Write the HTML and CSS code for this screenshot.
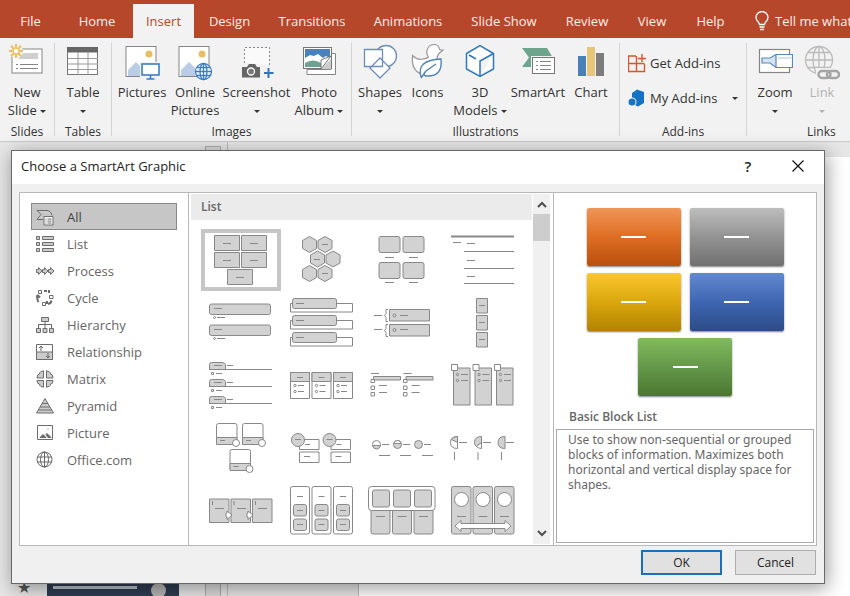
FILE: index.html
```html
<!DOCTYPE html>
<html lang="en">
<head>
<meta charset="utf-8">
<title>Choose a SmartArt Graphic</title>
<link rel="stylesheet" href="styles.css">
</head>
<body>
<div class="app">
<nav class="tabs">
<a href="#">File</a><a href="#">Home</a><a href="#" class="active" aria-current="page">Insert</a><a href="#">Design</a><a href="#">Transitions</a><a href="#">Animations</a><a href="#">Slide Show</a><a href="#">Review</a><a href="#">View</a><a href="#">Help</a>
<a href="#" class="tell"><svg width="14" height="20" viewBox="0 0 14 20" fill="none" stroke="#fff" stroke-width="1.3"><path d="M4.5 13.5C4.500 11 1 10 1 6.500a6 6 0 0 1 12 0C13 10 9.500 11 9.500 13.500zM4.500 16h5M5 18.500h4"/></svg>Tell me what</a>
</nav>

<div class="ribbon">
<section class="group">
 <div class="tools">
 <button class="tool"><svg width="36" height="38" viewBox="8 44 36 38"><rect x="11" y="50" width="30" height="24" fill="#fff" stroke="#858585"/><path d="M22 54h15v6H17z" fill="#cfcfcf"/><path d="M15 65.500h2m2 0h18M15 69.500h2m2 0h18" stroke="#858585"/><circle cx="15" cy="52" r="7" fill="#f2f2f2"/><path d="M15 45v3.500m0 7V59M8 52h3.500m7 0H22M10 47l2.500 2.500m5 5L20 57M20 47l-2.500 2.500m-5 5L10 57" stroke="#eebf60" stroke-width="2"/><circle cx="15" cy="52" r="3" fill="#fff" stroke="#eebf60" stroke-width="1.500"/></svg><span>New<br>Slide <i></i></span></button>
 </div><h2>Slides</h2>
</section>
<section class="group">
 <div class="tools">
 <button class="tool"><svg width="34" height="38" viewBox="66 44 34 38"><rect x="67.500" y="48.500" width="30" height="27" fill="#fff" stroke="#777"/><path d="M67 48h31v5.500H67z" fill="#666"/><path d="M78 53v23M88 53v23M68 59.500h30M68 65h30M68 70.500h30" stroke="#999"/></svg><span>Table<br><i></i></span></button>
 </div><h2>Tables</h2>
</section>
<section class="group">
 <div class="tools images">
 <button class="tool"><svg width="36" height="38" viewBox="125 44 36 38"><rect x="127" y="47.500" width="30" height="30" fill="#fff" stroke="#858585"/><circle cx="150" cy="55" r="3.500" fill="#e9bd68"/><path d="M129 77v-6l8-8 6 6v8z" fill="#b9cde6"/><rect x="141" y="63" width="20" height="15" fill="#f2f2f2"/><rect x="143" y="65" width="17" height="11" fill="#fff" stroke="#3b7fc0" stroke-width="1.600"/><path d="M151.500 76v4m-4 0h8" stroke="#3b7fc0" stroke-width="1.600"/></svg><span>Pictures</span></button>
 <button class="tool"><svg width="36" height="38" viewBox="178 44 36 38"><rect x="180" y="47.500" width="30" height="30" fill="#fff" stroke="#858585"/><circle cx="203" cy="55" r="3.500" fill="#e9bd68"/><path d="M182 77v-6l8-8 6 6v8z" fill="#b9cde6"/><g fill="#fff" stroke="#3b7fc0" stroke-width="1.300"><circle cx="204.500" cy="72.500" r="8"/><ellipse cx="204.500" cy="72.500" rx="3.500" ry="8"/><path d="M196.500 72.500h16M198 68.500h13M198 76.500h13M204.500 64.500v16"/></g></svg><span>Online<br>Pictures</span></button>
 <button class="tool"><svg width="36" height="38" viewBox="238 44 36 38"><path d="M243.500 64V48.500H268.500V66" fill="#fafafa" stroke="#888" stroke-dasharray="2 2"/><path d="M241 68h5l2-3h6l2 3h3v10.500h-18z" fill="#666"/><circle cx="250" cy="72.500" r="3.500" fill="#777" stroke="#fff" stroke-width="1.300"/><path d="M267.500 69v10M263 74h9.500" stroke="#3275b8" stroke-width="2"/></svg><span>Screenshot<br><i></i></span></button>
 <button class="tool"><svg width="36" height="38" viewBox="301 44 36 38"><path d="M307 75.500H335.500V54.500H331v16H307z" fill="#fff" stroke="#858585"/><rect x="303.500" y="48.500" width="28" height="21" fill="#fff" stroke="#777"/><path d="M305 50h25v9l-4-2-3 2-5-4-4 2-4-1-5 3z" fill="#4981bd"/><path d="M305 64q8-5 16 0v4h-16z" fill="#6ba390"/><path d="m321 70 10-10v10z" fill="#ccc"/><path d="m321 61 10-4-10 13z" fill="#fff" stroke="#777"/></svg><span>Photo<br>Album <i></i></span></button>
 </div><h2>Images</h2>
</section>
<section class="group">
 <div class="tools illustrations">
 <button class="tool"><svg width="36" height="38" viewBox="362 44 36 38" fill="#fff" stroke="#6a8fb9" stroke-width="1.300"><circle cx="386" cy="57" r="10.500"/><path d="M364.500 50.500h18v17h-18zM380 59l10 10-10 10-10-10z"/></svg><span>Shapes<br><i></i></span></button>
 <button class="tool"><svg width="36" height="38" viewBox="410 44 36 38" fill="#fff" stroke="#999" stroke-width="1.200"><path d="M422 75Q411 72 412.500 56.500q5 5 10 3.500 4 0 6-2-3-4-1-8 2-4.500 6.500-4.500 4.500 0 6 5.500h3l-4 3.500q-2 2-2 6v8q-4 8-15 6.500z"/><path d="M421 78Q416 61 441 60q2 18-15 17-4-1 0-5l10-7m-10 7-5 7" stroke="#4f83b9" stroke-width="1.400"/></svg><span>Icons</span></button>
 <button class="tool"><svg width="36" height="38" viewBox="462 44 36 38" fill="#fff" stroke="#2e78bf" stroke-width="1.500"><path d="m466.500 54.500 13.500-8 13.500 8V70L480 77.500 466.500 70zM469 56l7 4M493.500 54.500 480 62v15.500"/></svg><span>3D<br>Models <i></i></span></button>
 <button class="tool"><svg width="36" height="38" viewBox="521 44 36 38"><path d="M523 49h25l6 10-4 9h-27l7-9.500z" fill="#6da58c"/><rect x="532" y="57" width="25" height="20" fill="#f2f2f2"/><rect x="533.500" y="58.500" width="22" height="16" fill="#fff" stroke="#777"/><path d="M537 62.500h2m2 0h11M537 66.500h2m2 0h11M537 70.500h2m2 0h11" stroke="#8a8a8a"/></svg><span>SmartArt</span></button>
 <button class="tool"><svg width="36" height="38" viewBox="573 44 36 38"><path d="M578 57h8v20h-8z" fill="#4a80b8"/><path d="M587 48h8v29h-8z" fill="#e8c578"/><path d="M596 54h8v23h-8z" fill="#7c7c7c"/></svg><span>Chart</span></button>
 </div><h2>Illustrations</h2>
</section>
<section class="group">
 <div class="addins">
 <button><svg width="18" height="20" viewBox="628 53 18 20" fill="none" stroke="#d8562c" stroke-width="1.400"><path d="M636 56h-7.500v15.500h16V64M628.500 63.500h16M636.500 56v15.500M638 58.500h8M642 54v8"/></svg>Get Add-ins</button>
 <button><svg width="18" height="18" viewBox="629 89 18 18"><path d="m638 89.500 7 2.500v11l-6 3.500-6-3V93z" fill="#1673c4"/><circle cx="633" cy="102" r="4.500" fill="#f2f2f2"/><circle cx="633" cy="102" r="3.500" fill="#1673c4"/></svg>My Add-ins<i></i></button>
 </div><h2>Add-ins</h2>
</section>
<section class="group">
 <div class="tools links">
 <button class="tool"><svg width="36" height="38" viewBox="757 44 36 38" stroke-width="1.200"><rect x="759.500" y="50.500" width="30" height="23" fill="#fff" stroke="#858585"/><path d="M762 59h8l6-3.500h16.500v13H776l-6-4.500h-8z" fill="#d5e3f2" stroke="#5789b8"/><path d="M776 55.500h16.500v13H776z" fill="#fff" stroke="#5789b8"/><path d="M778 59h13" stroke="#b9cde6"/></svg><span>Zoom<br><i></i></span></button>
 <button class="tool" disabled><svg width="36" height="38" viewBox="804 44 36 38" fill="none" stroke="#bbb" stroke-width="1.300"><circle cx="819" cy="61" r="13.500"/><ellipse cx="819" cy="61" rx="6" ry="13.500"/><path d="M805.500 61h27M808 53.500h22M808 68.500h22M819 47v28"/><path d="M816 69h24v13h-24z" fill="#f2f2f2" stroke="none"/><g stroke="#a5a5a5" stroke-width="2.500"><rect x="818.500" y="72" width="12" height="7" rx="3.500"/><rect x="827" y="72" width="12" height="7" rx="3.500"/></g></svg><span>Link<br><i></i></span></button>
 </div><h2>Links</h2>
</section>
</div>

<main class="work">
 <aside class="thumbs"><span class="star">★</span><div class="slide"><div><b></b><b></b></div><em></em></div><div class="track"></div></aside>
 <div class="pane"></div><div class="canvas"></div>

 <section class="dialog" role="dialog" aria-labelledby="title">
 <header><h1 id="title">Choose a SmartArt Graphic</h1><button aria-label="Help" class="q">?</button><button aria-label="Close"><svg width="12" height="12" viewBox="0 0 12 12" stroke="#111" stroke-width="1.200"><path d="m.5.5 11 11m0-11-11 11"/></svg></button></header>
 <div class="panel">
 <div class="cats">
 <button class="on"><svg viewBox="36 208 18 18"><path d="M37 210.500h9q5 0 6 5M37 210.500l4 4-4 5h6"/><path class="w" d="M44 216.500h9v8.500h-9z"/><path d="M45.500 219h1m1 0h4m-6 2h1m1 0h4m-6 2h1m1 0h4"/></svg>All</button>
 <button><svg viewBox="36 235 18 18"><path d="M36.500 236.500h3v3h-3zm0 6h3v3h-3zm0 6h3v3h-3zM42.500 236.500h11v3h-11zm0 6h11v3h-11zm0 6h11v3h-11z"/></svg>List</button>
 <button><svg viewBox="36 262 18 18"><path d="M36.500 269.500h2v-2l3.500 3.500-3.500 3.500v-2h-2zM42.500 269.500h2v-2l3.500 3.500-3.500 3.500v-2h-2zM48.500 269.500h2v-2l3.500 3.500-3.500 3.500v-2h-2z"/></svg>Process</button>
 <button><svg viewBox="36 289 18 18"><path class="w" d="M38.500 290.500h3v3h-3zM49.500 295.500h3.500v3h-3.500zM42.500 302.500h3v3h-3z"/><path class="thick" d="M44 291h3m2-1v3m2.500 7.500q-.5 3-3.500 3.500m-1-3v3m-8.500-2q-2-3-.5-6m-2.500 1 2.500-1.500 2 2"/></svg>Cycle</button>
 <button><svg viewBox="36 316 18 18"><path d="M41.500 317.500h7v4h-7zM45 322v6"/><path class="n" d="M38.500 328v-3.500h13v3.500"/><path d="M36.500 328.500h4v4h-4zm6.500 0h4v4h-4zm6.500 0h4v4h-4z"/></svg>Hierarchy</button>
 <button><svg viewBox="36 343 18 18"><path class="w" d="M36.500 344.500h16v15h-16z"/><path d="M36.500 352h16v7.500h-16z"/><path class="n" d="M41 351v-5m-2 2 2-2 2 2m5 5v5m-2-2 2 2 2-2"/></svg>Relationship</button>
 <button><svg viewBox="36 370 18 18"><path d="M43.500 371v7H37q0-4 2.500-4 0-3 4.500-3zm3 0v7H53q0-4-2.500-4 0-3-4.500-3zm-3 16v-6.500H37q0 3.500 2.500 3.500 0 3 4.500 3zm3 0v-6.500H53q0 3.500-2.500 3.500 0 3-4.500 3z"/></svg>Matrix</button>
 <button><svg viewBox="36 397 18 18"><path d="m45 398.500 8.500 14.500h-17zM42 403.500h6M40 407h10M38 410h14"/></svg>Pyramid</button>
 <button><svg viewBox="36 424 18 18"><path class="w" d="M37.500 425.500h15v14h-15z"/><path d="m40 437.500 3-3 3 3zm6-3 1-1 4 4h-3z" class="d"/><circle cx="48" cy="429" r="1" class="g"/></svg>Picture</button>
 <button><svg viewBox="36 451 18 18" ><g class="n"><circle cx="44.500" cy="459.500" r="7.500"/><ellipse cx="44.500" cy="459.500" rx="4" ry="7.500"/><path d="M37 457h15m-15 5h15m-7.500-10v15"/></g></svg>Office.com</button>
 </div>

 <div class="gallery">
 <div class="listing"><h3>List</h3>
 <div class="grid">
 <button class="sel" aria-label="Basic Block List"><svg viewBox="201 229 80 62"><path class="f" d="M214.500 235.500h25v15h-25zm27 0h25v15h-25zm-27 17h25v15h-25zm27 0h25v15h-25zm-14 17h25v15h-25z"/><path d="M223 243.500h8m19 0h8m-35 17h8m19 0h8m-22 17h8"/></svg></button>
 <button aria-label="Alternating Hexagons"><svg viewBox="281 229 80 62"><path class="f" d="m309.500 236.500 7 4v8l-7 4-7-4v-8zm15.500 0 7 4v8l-7 4-7-4v-8zm-7.500 14.500 7 4v8l-7 4-7-4v-8zm15.500 0 7 4v8l-7 4-7-4v-8zm-23.500 14.500 7 4v8l-7 4-7-4v-8zm15.500 0 7 4v8l-7 4-7-4v-8z"/><path d="M322 244.500h6m-14 15h6m2 14h6"/></svg></button>
 <button aria-label="Picture Caption List"><svg viewBox="361 229 80 62"><g class="f"><rect x="379" y="236.500" width="21" height="16" rx="2"/><rect x="403" y="236.500" width="21" height="16" rx="2"/><rect x="379" y="262.500" width="21" height="16" rx="2"/><rect x="403" y="262.500" width="21" height="16" rx="2"/></g><path d="M385 257.500h9m15 0h9m-33 25h9m15 0h9"/></svg></button>
 <button aria-label="Lined List"><svg viewBox="441 229 80 62"><path d="M451 236.500h63" stroke-width="2"/><path d="M453 242.500h8m6 1h8m-11 8h50m-47 9h8m-11 8h50m-47 8h8m-11 7h50"/></svg></button>

 <button aria-label="Vertical Bullet List"><svg viewBox="201 292 80 62"><g class="f"><rect x="209.500" y="304" width="61" height="10.500" rx="2"/><rect x="209.500" y="325" width="61" height="10.500" rx="2"/></g><path d="M214 308.500h8m-5 9h8m-11 12h8m-5 9h8"/><circle cx="214.500" cy="317.500" r="1"/><circle cx="214.500" cy="338.500" r="1"/></svg></button>
 <button aria-label="Vertical Box List"><svg viewBox="281 292 80 62"><defs><g id="vb"><path class="w" d="M290.500 303.500h62v8.500h-62z"/><rect class="f" x="292.500" y="298.500" width="44" height="10" rx="2"/><path d="M296 303.500h8"/></g></defs><use href="#vb"/><use href="#vb" y="17"/><use href="#vb" y="34"/></svg></button>
 <button aria-label="Vertical Bracket List"><svg viewBox="361 292 80 62"><path class="f" d="M389.500 309.500h40v11.500h-40zm0 15h40v11.500h-40z"/><path d="M374 315.500h8m18 0h8m-34 14h8m18 0h8M388 309.500h-2v4l-1.500 2 1.500 2v4h2m0 3h-2v4l-1.500 2 1.500 2v4h2"/><circle cx="394.500" cy="315.500" r="1.500"/><circle cx="394.500" cy="330" r="1.500"/></svg></button>
 <button aria-label="Stacked Blocks"><svg viewBox="441 292 80 62"><path class="f" d="M476.500 298.500h11V313h-11zm0 17h11V330h-11zm0 17h11V347h-11z"/><path d="M479 305.500h6m-6 17h6m-6 17h6"/></svg></button>

 <button aria-label="Tab List"><svg viewBox="201 355 80 62"><defs><g id="tl"><path class="f" d="M209.500 369.500v-5q0-2 2-2h11q2 0 3 2v5z"/><path d="M209 369.500h63M214 365.500h8m5 0h6m-17 8h6"/><path class="w" d="M211.500 372.500h2v2h-2z"/></g></defs><use href="#tl"/><use href="#tl" y="17"/><use href="#tl" y="34"/></svg></button>
 <button aria-label="Horizontal Bullet List"><svg viewBox="281 355 80 62"><defs><g id="hb"><path class="w" d="M290.500 372.500h19v26h-19z"/><path class="f" d="M290.500 372.500h19v9h-19z"/><path d="M297 377.500h6m-5 8h6m-6 6h6"/><circle cx="295" cy="385.500" r="1.200"/><circle cx="295" cy="391.500" r="1.200"/></g></defs><use href="#hb"/><use href="#hb" x="21.500"/><use href="#hb" x="43"/></svg></button>
 <button aria-label="Square Accent List"><svg viewBox="361 355 80 62"><defs><g id="sa"><path d="M371 373.500h8m0 12h8m-8 7h8"/><path class="f" d="M373.500 376.500h27v3.500h-27z"/><path class="w" d="M371 379.500h3.500v3H371zm0 6.500h3.500v3.500H371zm0 6.500h3.500v3.500H371z"/></g></defs><use href="#sa"/><use href="#sa" x="32.500"/></svg></button>
 <button aria-label="Picture Accent List"><svg viewBox="441 355 80 62"><defs><g id="pa"><path class="f" d="M453.500 368h16.500v37h-16.500z"/><path class="w" d="M451.500 364.500h6v6h-6z"/><path d="M461 374.500h7m-7 6h7"/><circle cx="457.500" cy="374.500" r="1.200"/><circle cx="457.500" cy="380.500" r="1.200"/></g></defs><use href="#pa"/><use href="#pa" x="21.500"/><use href="#pa" x="43"/></svg></button>

 <button aria-label="Bending Picture Accent"><svg viewBox="201 418 80 62"><defs><g id="bp"><rect class="w" x="216.500" y="423.500" width="20.500" height="20.500" rx="2"/><path class="f" d="M216.500 437.500H237v7h-20.500z"/><path d="M220 440.500h5"/><circle class="w" cx="236" cy="443" r="3.500"/></g></defs><use href="#bp"/><use href="#bp" x="26"/><use href="#bp" x="13.500" y="26"/></svg></button>
 <button aria-label="Stacked List"><svg viewBox="281 418 80 62"><defs><g id="st"><path class="w" d="M299.500 439.500h19.500v10h-19.500zm0 12.500h19.500v10.500h-19.500z"/><circle class="f" cx="298" cy="440" r="6.500"/><path d="M295 439.500h6m4 5h5m-6 12h6"/></g></defs><use href="#st"/><use href="#st" x="31.500"/></svg></button>
 <button aria-label="Increasing Circle Process"><svg viewBox="361 418 80 62"><g class="w"><circle cx="376.500" cy="444.500" r="4"/><circle class="f" cx="397.500" cy="444.500" r="4"/><circle class="f" cx="418.500" cy="444.500" r="4"/></g><path class="f" d="M372.500 445.500h8q-1 3.500-4 3.500t-4-3.500z"/><path class="w" d="M393.500 443.500h8q-1-3-4-3t-4 3z"/><path d="M382 444.500h7m14 0h7m14 0h7m-52 11h11m10 0h11m11 0h11"/></svg></button>
 <button aria-label="Pie Process"><svg viewBox="441 418 80 62"><path class="w" d="M457.500 436.500v12q-7 0-7-6t7-6z"/><path class="f" d="M457.500 442.500v-6q-4 0-6 3zM481.500 436.500v6l-5 4q-2-1-2-4 0-6 7-6zM505 436.500v12q-7 0-7-6t7-6z"/><path class="w" d="M481.500 442.500v6q-3 0-5-2z"/><path d="M459 442.500h8m16 0h8m15 0h8M454.500 452v8m23.500-8v8m23.500-8v8"/></svg></button>

 <button aria-label="Detailed Process"><svg viewBox="201 481 80 62"><path class="f" d="M209.500 499h19.500v23.500h-19.500zm21.500 0h19.500v23.500H231zm21.500 0H272v23.500h-19.500z"/><path d="M215 508.500h9m13 0h9m12 0h9M212.500 501v4m21.500-4v4m21.500-4v4"/><path class="w" d="M227 511v2h-1v4h1v2.500l5-4.500zM248 511v2h-1v4h1v2.500l5-4.500z"/></svg></button>
 <button aria-label="Grouped List"><svg viewBox="281 481 80 62"><defs><g id="gl"><rect class="w" x="290.500" y="486.500" width="19" height="47.500" rx="2"/><g class="f"><rect x="293.500" y="504.500" width="13" height="11.500" rx="2"/><rect x="293.500" y="519" width="13" height="11.500" rx="2"/></g><path d="M297 496.500h6m-6 14h6m-6 14h6"/></g></defs><use href="#gl"/><use href="#gl" x="21.500"/><use href="#gl" x="43"/></svg></button>
 <button aria-label="Horizontal Picture List"><svg viewBox="361 481 80 62"><defs><g id="hp"><path class="f" d="M371 510.500h19V532q0 2-2 2h-15q-2 0-2-2z"/><path d="M376 516.500h9"/></g><rect id="hq" class="f" x="372.500" y="490" width="17" height="17" rx="2"/></defs><use href="#hp"/><use href="#hp" x="21.500"/><use href="#hp" x="43"/><rect class="w" x="368.500" y="486.500" width="66.500" height="24" rx="3"/><use href="#hq"/><use href="#hq" x="21"/><use href="#hq" x="42"/></svg></button>
 <button aria-label="Continuous Picture List"><svg viewBox="441 481 80 62"><defs><g id="cp"><rect class="f" x="451.500" y="486.500" width="19.500" height="47.500" rx="2"/><circle class="w" cx="461.500" cy="499.500" r="7"/><path d="M457 516.500h9"/></g></defs><use href="#cp"/><use href="#cp" x="21.500"/><use href="#cp" x="43"/><path class="w" d="m455 526 6-5.500v3h44v-3l6 5.500-6 5.500v-3h-44v3z"/></svg></button>
 </div></div>
 <div class="scroll"><svg viewBox="0 0 10 8"><path d="m1 6 4-4 4 4"/></svg><span></span><svg viewBox="0 0 10 8"><path d="m1 2 4 4 4-4"/></svg></div>
 </div>

 <div class="preview">
 <div class="blocks"><b class="orange"></b><b class="gray"></b><b class="gold"></b><b class="blue"></b><b class="green"></b></div>
 <h3>Basic Block List</h3>
 <p>Use to show non-sequential or grouped blocks of information. Maximizes both horizontal and vertical display space for shapes.</p>
 </div>
 </div>
 <footer><button class="ok">OK</button><button>Cancel</button></footer>
 </section>
</main>
</div>
</body>
</html>
```
FILE: styles.css
```css
* { box-sizing: border-box; }
body { margin: 0; font: 13px/18px "Open Sans", "Noto Sans", sans-serif; color: #333; overflow: hidden; }
button { font: inherit; color: inherit; border: 0; background: none; padding: 0; }
h1, h2, h3, p { margin: 0; font-weight: 400; }
svg { display: block; flex: none; }
.app { min-height: 100vh; display: flex; flex-direction: column; }

.tabs { background: #b7472a; padding-top: 4px; display: grid; grid-template-columns: 61px 72px 61px 71px 94px 98px 94px 72px 58px 59px 1fr; white-space: nowrap; }
.tabs a { color: #fdeee9; text-decoration: none; text-align: center; line-height: 34px; }
.tabs .active { background: #f2f2f2; color: #b7472a; }
.tabs .tell { display: flex; align-items: center; gap: 6px; padding-left: 15px; }

.ribbon { background: #f2f2f2; border-bottom: 1px solid #c9c9c9; display: grid; grid-template-columns: 55px 57px 240px 268px 127px 1fr; padding: 5px 0; height: 104px; }
.group { border-right: 1px solid #d4d4d4; display: flex; flex-direction: column; justify-content: space-between; min-width: 0; white-space: nowrap; }
.group:last-child { border: 0; }
.group h2 { font-size: 12px; text-align: center; line-height: 8px; }
.tools { display: grid; justify-content: center; }
.images { grid-template-columns: 52px 54px 69px 56px; }
.illustrations { grid-template-columns: 48px 47px 58px 58px 48px; }
.links { grid-template-columns: 46px 48px; justify-content: start; padding-left: 5px; }
.group .links + h2 { text-align: left; padding-left: 60px; }
.tool { display: flex; flex-direction: column; align-items: center; }
.tool span { display: block; margin: 2px -8px 0; text-align: center; }
.tool:disabled { color: #b3b3b3; }
.group i { display: inline-block; border: 3px solid transparent; border-top-color: currentColor; border-bottom: 0; vertical-align: middle; }
.addins { display: flex; flex-direction: column; gap: 15px; padding: 10px 0 0 8px; }
.addins button { display: flex; align-items: center; gap: 4px; height: 20px; }
.addins i { margin-left: 11px; }

.work { flex: 1; min-height: 454px; position: relative; display: grid; grid-template-columns: 228px 131px 1fr; background: #e6e6e6; }
.thumbs { border-right: 1px solid #bbb; display: flex; align-items: flex-end; padding-left: 17px; gap: 16px; height: 454px; }
.star { color: #555; font-size: 16px; }
.slide { width: 132px; height: 18px; background: #2e3b50; padding: 5px 13px 0 6px; display: flex; gap: 14px; overflow: hidden; }
.slide div { flex: 1; }
.slide b { display: block; height: 3px; margin-top: 2px; background: #b5bbc5; }
.slide b:first-child { width: 38px; background: #667184; height: 1px; margin: 0; }
.slide em { width: 15px; height: 15px; border-radius: 50%; background: #b5b5b5; }
.track { width: 16px; height: 450px; margin: 0 0 0 10px; border: 1px solid #aaa; border-bottom: 0; background: #dadada; }
.pane { border-right: 1px solid #bbb; margin-top: 15px; }
.canvas { background: #fff; margin-top: 15px; }

.dialog { position: absolute; top: 8px; left: 11px; right: 25px; background: #f0f0f0; border: 1px solid #686868; box-shadow: 2px 4px 18px rgba(0,0,0,.4); display: flex; flex-direction: column; }
.dialog header { background: #fff; height: 33px; display: flex; align-items: center; padding: 0 9px 3px; }
.dialog h1 { font-size: 13px; color: #222; flex: 1; }
.dialog header button { width: 34px; display: grid; place-items: center; margin-left: 16px; }
.q { font-size: 15px; font-weight: 600; color: #222; }
.panel { margin: 8px 7px 0; border: 1px solid #b8b8b8; background: #fff; display: grid; grid-template-columns: 169px 1fr 262px; min-height: 354px; color: #666; }
.cats { padding: 10px 11px; border-right: 1px solid #b8b8b8; }
.cats button { display: flex; align-items: center; gap: 13px; width: 146px; height: 27px; padding: 0 5px; }
.cats .on { background: #c6c6c6; outline: 1px solid #888; outline-offset: -1px; color: #444; }
.cats svg { width: 18px; height: 18px; }
.cats path, .cats circle, .cats ellipse { fill: #ccc; stroke: #6c6c6c; }
.cats .w { fill: #fff; }
.cats .n, .cats .n * { fill: none; stroke: #666; }
.cats .thick { fill: none; stroke-width: 2; }
.cats .d { fill: #666; }
.cats .g { stroke: none; }
.gallery { display: flex; border-right: 1px solid #b8b8b8; padding: 1px 3px 1px 2px; }
.listing { flex: 1; margin-right: 1px; }
h3 { font-size: 12px; font-weight: 600; }
.listing h3 { background: #ebebeb; line-height: 26px; padding-left: 10px; }
.grid { display: grid; grid-template-columns: repeat(4, 80px); grid-auto-rows: 62px; row-gap: 1px; padding: 9px 0 0 10px; }
.grid svg { width: 80px; height: 62px; fill: none; stroke: #888; }
.grid .f { fill: #d2d2d2; }
.grid .w { fill: #fff; }
.sel { outline: 4px solid #c6c6c6; outline-offset: -4px; }
.scroll { width: 17px; background: #f0f0f0; display: flex; flex-direction: column; align-items: center; justify-content: space-between; padding: 7px 0; }
.scroll svg { width: 10px; height: 8px; fill: none; stroke: #505050; stroke-width: 2; }
.scroll span { width: 17px; height: 27px; background: #cdcdcd; margin: 5px 0 auto; }
.preview { padding: 15px 2px 2px; display: flex; flex-direction: column; }
.blocks { display: flex; flex-wrap: wrap; justify-content: center; gap: 7px 9px; }
.blocks b { width: 94px; height: 58px; border-radius: 2px; box-shadow: 0 1px 2px rgba(0,0,0,.5); display: grid; place-items: center; }
.blocks b::after { content: ""; width: 25px; height: 2px; background: #fff; }
.orange { background: linear-gradient(#f09558, #de6d22 50%, #b9500e); }
.gray { background: linear-gradient(#bdbdbd, #939393 50%, #707070); }
.gold { background: linear-gradient(#fac72d, #dba70f 50%, #b18300); }
.blue { background: linear-gradient(#6389cf, #3f66b2 50%, #2c4c87); }
.green { background: linear-gradient(#81bb5c, #65984a 50%, #4b7731); }
.preview h3 { padding: 12px 13px 3px; }
.preview p { flex: 1; border: 1px solid #aaa; padding: 2px 4px 0 11px; font: 12px/15px "Noto Sans", sans-serif; }
.dialog footer { display: flex; justify-content: flex-end; gap: 13px; padding: 4px 8px 8px; }
.dialog footer button { width: 81px; height: 25px; border: 1px solid #adadad; background: #e1e1e1; color: #222; font-size: 12px; }
.dialog footer .ok { border: 2px solid #1670bd; }
```
